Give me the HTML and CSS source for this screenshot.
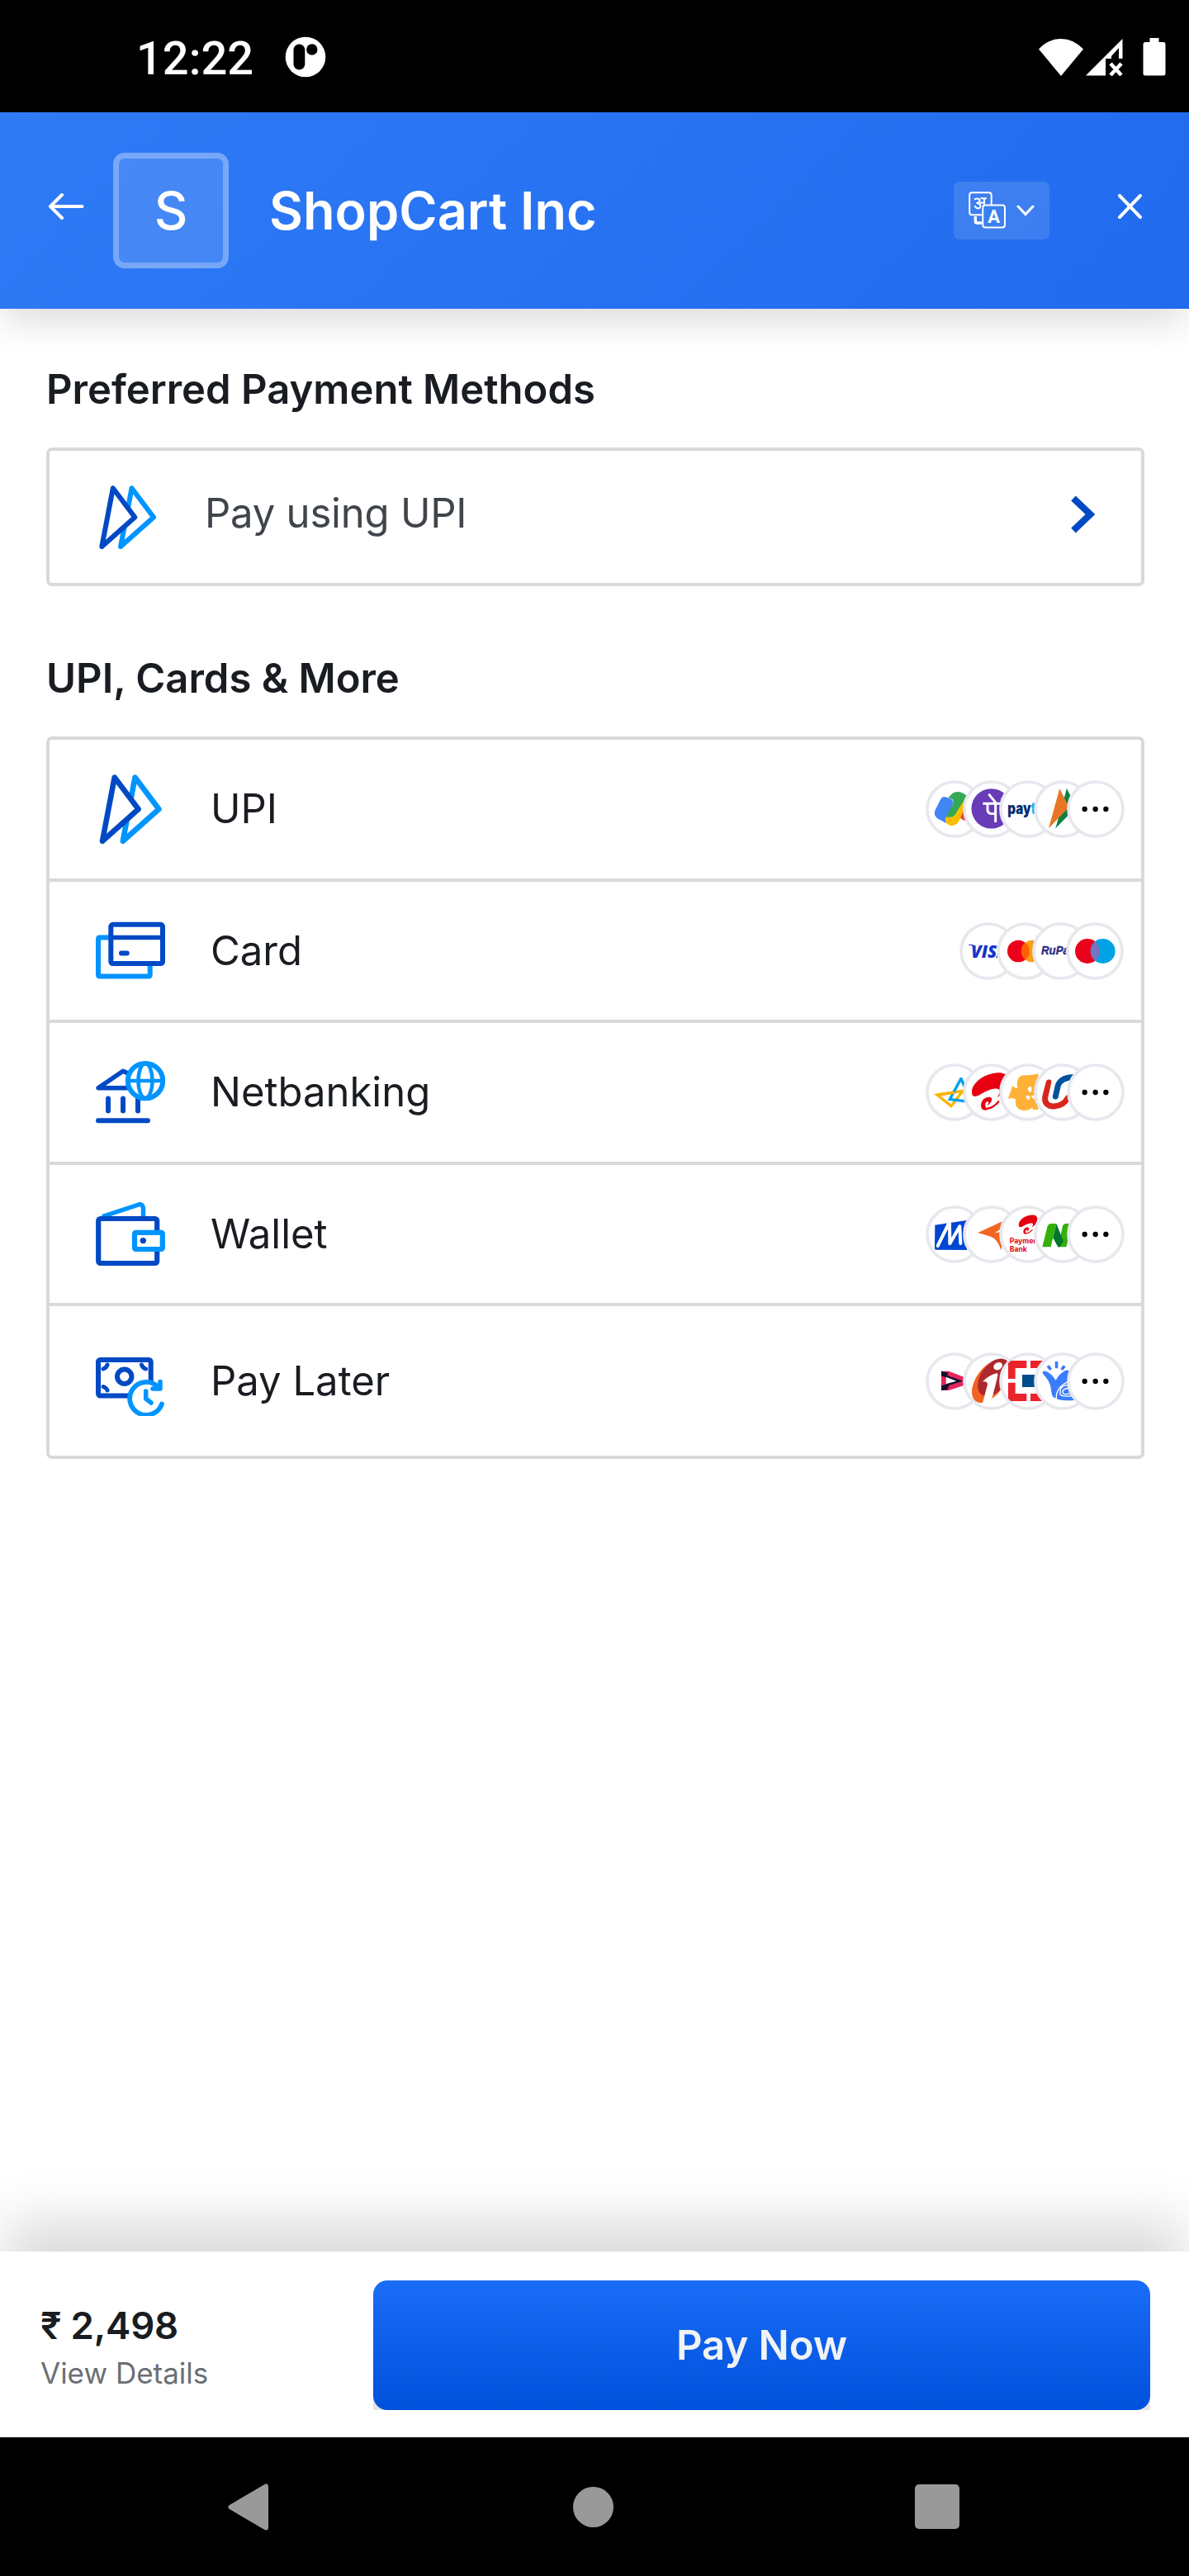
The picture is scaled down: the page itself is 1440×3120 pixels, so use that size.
FILE: index.html
```html
<!DOCTYPE html>
<html lang="en">
<head>
<meta charset="utf-8">
<title>ShopCart Inc - Checkout</title>
<link rel="stylesheet" href="styles.css">
</head>
<body>
<svg class="defs" width="0" height="0">
  <symbol id="upi" viewBox="0 0 84 84">
    <g fill="#fff" stroke-width="6.6" stroke-linejoin="round">
      <path stroke="#0094ff" d="M47.5 3.6 76.4 42 32.8 80.8Z"/>
      <path stroke="#0049c4" d="M22.7 3.6 51.6 42 8 80.8Z"/>
    </g>
  </symbol>
  <symbol id="more" viewBox="0 0 210 210">
    <circle cx="105" cy="105" r="99" class="ring"/>
    <circle cx="65" cy="105" r="9.5"/><circle cx="104" cy="105" r="9.5"/><circle cx="142" cy="105" r="9.5"/>
  </symbol>
  <symbol id="airtel" viewBox="0 0 140 150">
    <path fill="#e60012" d="M3 84C-4 55 30 17 78 7C110-1 136 5 139 30C141 52 120 82 98 96C106 80 112 68 98 64C78 60 48 76 28 89C14 95 5 93 3 84Z"/>
    <path fill="none" stroke="#e60012" stroke-width="7" stroke-linecap="round" d="M60 138C76 136 92 124 102 112"/>
    <path fill="#e60012" d="M37 132C33 108 52 92 70 95C86 100 72 121 58 128C66 118 68 110 58 112C48 118 52 136 62 141C48 148 38 141 37 132Z"/>
  </symbol>
</svg>

<div class="status">
  <span class="time">12:22</span>
  <svg class="app" viewBox="0 0 50 50"><circle cx="25" cy="25" r="24.3" fill="#fff"/><rect x="10.5" y="9.4" width="13.8" height="31.2" rx="6.9"/><circle cx="32.8" cy="16" r="6.7"/></svg>
  <svg class="wifi" viewBox="0 0 54 45"><path fill="#fff" d="M27 45 0 12.5Q12 0 27 0T54 12.5Z"/></svg>
  <svg class="signal" viewBox="0 0 45 45"><path fill="#fff" d="M44.500 0V24H40V11L31 21V24H24V44.500H0Z"/><path stroke="#fff" stroke-width="4.500" d="m30 30 13 14m0-14L30 44"/></svg>
  <svg class="battery" viewBox="0 0 28 46"><path fill="#fff" d="M8.500 0h11v5H25q2.500 0 2.500 3v35q0 2.500-2.500 2.500H3Q.5 45.500.5 43V8q0-3 2.500-3h5.500Z"/></svg>
</div>

<header class="header">
  <svg class="back" viewBox="0 0 44 34"><path d="M41.500 17H3M17 3 3 17l14 14" fill="none" stroke="#fff" stroke-width="4" stroke-linecap="round" stroke-linejoin="round"/></svg>
  <div class="logo">S</div>
  <h1 class="title">ShopCart Inc</h1>
  <div class="lang">
    <svg class="translate" viewBox="0 0 45 45">
      <g fill="none" stroke="#fff" stroke-width="2">
        <rect x="1.200" y="1.200" width="26.500" height="27" rx="3"/>
        <path d="M8.300 30v6q0 2 2 2h6" stroke-width="3.400"/>
        <path d="M7 9.500q5-2.500 6.500 1 0 3-4 3.500 5 0 5 3.500-1 4-4.500 2.500-2-1-2.500-3M14 13.500h5M19 8v10M14.500 8.200h7.500" stroke-width="2"/>
      </g>
      <rect x="17.300" y="16.500" width="26.700" height="27" rx="3" fill="#3b80ef" stroke="#fff" stroke-width="2"/>
      <text x="30.700" y="38" text-anchor="middle" font-size="22" font-weight="700" fill="#fff" font-family="Roboto, sans-serif">A</text>
    </svg>
    <svg class="down" viewBox="0 0 22 14"><path d="m2 2 9 9.500L20 2" fill="none" stroke="#fff" stroke-width="3" stroke-linecap="round"/></svg>
  </div>
  <svg class="close" viewBox="0 0 29 30"><path d="m2 2 25 26M27 2 2 28" stroke="#fff" stroke-width="4" stroke-linecap="round"/></svg>
</header>

<main class="main">
  <h2 class="heading">Preferred Payment Methods</h2>
  <div class="preferred">
    <svg class="pref-icon"><use href="#upi"/></svg>
    <span class="pref-label">Pay using UPI</span>
    <svg class="next" viewBox="0 0 30 46"><path d="M3 3.500 23.500 23 3 42.500" fill="none" stroke="#0049c4" stroke-width="8"/></svg>
  </div>

  <h2 class="heading second">UPI, Cards &amp; More</h2>
  <ul class="methods">
    <li class="row">
      <svg class="icon"><use href="#upi"/></svg>
      <span class="label">UPI</span>
      <div class="brands">
        <svg viewBox="0 0 210 210"><circle cx="105" cy="105" r="99" class="ring"/>
          <path fill="#ea4335" d="M120 125 150 85V148Q134 148 122 132Z"/>
          <path fill="#4285f4" d="M66 60Q74 60 86 65Q104 72 99 86L76 157L42 138Q29 128 34 110L54 70Q59 61 66 60Z"/>
          <path fill="#fbbc04" d="M75 132Q92 138 100 128L134 74H152L122 148Q110 168 88 164Q72 158 71 142Z"/>
          <path fill="#34a853" d="M98 70Q90 65 83 64Q96 43 116 42Q132 42 150 57L106 126Q96 140 76 131Q78 122 96 94Q104 80 98 70Z"/></svg>
        <svg viewBox="0 0 210 210"><circle cx="105" cy="105" r="99" class="ring"/>
          <circle cx="104" cy="103" r="72.500" fill="#683bb7"/>
          <path fill="none" stroke="#fff" stroke-width="9" d="M73 85H150M94 50 120 82M90 87V108Q92 127 119 120M119 85V153"/></svg>
        <svg viewBox="0 0 210 210"><circle cx="105" cy="105" r="99" class="ring"/>
          <text x="31" y="122" class="paytm" textLength="146" lengthAdjust="spacingAndGlyphs">pay<tspan class="cyan">tm</tspan></text></svg>
        <svg viewBox="0 0 210 210"><circle cx="105" cy="105" r="99" class="ring"/>
          <path fill="#0a8043" d="M120 30 154 98 79 175Z"/><path fill="#e97626" d="M94 30 128 98 54 175Z"/></svg>
        <svg><use href="#more"/></svg>
      </div>
    </li>
    <li class="row short">
      <svg class="icon" viewBox="0 0 84 84"><g fill="none" stroke-width="6" stroke-linecap="round" stroke-linejoin="round">
        <path stroke="#0094ff" d="M16 25.400H5Q3 25.400 3 27.400V70.600Q3 72.600 5 72.600H63.700Q65.700 72.600 65.700 70.600V60"/>
        <rect x="18.300" y="9.800" width="62.700" height="47.200" rx="2.500" stroke="#0049c4" fill="#fff"/>
        <path stroke="#0049c4" d="M19 25.600H80" stroke-width="5.500"/><path stroke="#0049c4" d="M31 44.400H37.700"/></g></svg>
      <span class="label">Card</span>
      <div class="brands four">
        <svg viewBox="0 0 210 210"><circle cx="105" cy="105" r="99" class="ring"/>
          <path fill="#1434cb" d="M33 81H50V87Q42 83 33 83Z"/>
          <text x="42" y="128" class="visa" textLength="136" lengthAdjust="spacingAndGlyphs">VISA</text></svg>
        <svg viewBox="0 0 210 210"><circle cx="105" cy="105" r="99" class="ring"/>
          <circle cx="79" cy="105" r="40" fill="#eb001b"/><circle cx="130" cy="105" r="40" fill="#f79e1b"/><path fill="#ff5f00" d="M104.500 74A40 40 0 0 1 104.500 136A40 40 0 0 1 104.500 74"/></svg>
        <svg viewBox="0 0 210 210"><circle cx="105" cy="105" r="99" class="ring"/>
          <text x="33" y="117" class="rupay" textLength="124" lengthAdjust="spacingAndGlyphs">RuPay</text></svg>
        <svg viewBox="0 0 210 210"><circle cx="105" cy="105" r="99" class="ring"/>
          <circle cx="78" cy="105" r="45" fill="#eb001b"/><circle cx="134" cy="105" r="45" fill="#00a2e5"/><path fill="#7673c0" d="M106 70A45 45 0 0 1 106 140A45 45 0 0 1 106 70"/></svg>
      </div>
    </li>
    <li class="row">
      <svg class="icon" viewBox="0 0 84 84"><g fill="none" stroke="#0049c4" stroke-width="6" stroke-linecap="round" stroke-linejoin="round">
        <path d="M50 24 33 16.200 3 36.800H50" stroke-width="5.500"/>
        <path d="M15 49.500V64.500M33 49.500V64.500M51 49.500V64.500M3 76.300H63"/>
        <g stroke="#0094ff"><circle cx="60" cy="28.100" r="21.200" fill="#fff"/><ellipse cx="60" cy="28.100" rx="8.500" ry="21" stroke-width="4.500"/><path d="M39 28.100H81" stroke-width="4.500"/></g></g></svg>
      <span class="label">Netbanking</span>
      <div class="brands">
        <svg viewBox="0 0 210 210"><circle cx="105" cy="105" r="99" class="ring"/>
          <g fill="none" stroke-width="10"><path stroke="#ffb300" d="M42 114 93 155 135 100Z"/><path stroke="#00a0f0" d="M130 53 88 130 165 140 128 53"/><path stroke="#ffb300" d="M42 114 105 106"/></g></svg>
        <svg viewBox="0 0 210 210"><circle cx="105" cy="105" r="99" class="ring"/><use href="#airtel" x="31" y="29" width="136" height="148"/></svg>
        <svg viewBox="0 0 210 210"><circle cx="105" cy="105" r="99" class="ring"/>
          <path fill="#ffb137" d="M32 130 49 81Q56 92 68 88Q62 76 66 66Q70 44 92 43Q120 44 142 37V168H122V158Q112 171 88 171Q64 168 60 148Q59 138 60 130Q46 122 32 130Z"/>
          <path fill="#fff" d="M104 90q6-8 13-5q4 14-3 20q-8-2-10-15M97 118q8-6 15 2q0 12-6 13q-8-4-9-15M117 118q8-4 18 0v10q-10 6-18-10"/></svg>
        <svg viewBox="0 0 210 210"><circle cx="105" cy="105" r="99" class="ring"/>
          <g fill="none" stroke-width="21" stroke-linecap="round"><path stroke="#d9251d" d="M55 69 42 118C36 146 54 157 74 156Q108 154 124 125"/><path stroke="#fff" stroke-width="9" d="M70 60 60 112Q56 140 77 139Q96 137 104 110L118 66"/><path stroke="#00529b" d="M79 120 88 80Q98 52 140 50"/></g></svg>
        <svg><use href="#more"/></svg>
      </div>
    </li>
    <li class="row short">
      <svg class="icon" viewBox="0 0 84 84"><g fill="none" stroke-width="6.200" stroke-linejoin="round">
        <path stroke="#0094ff" stroke-width="5.500" d="M8 20.500 52 6Q57.500 5 57.500 11V21"/>
        <rect x="3.200" y="23" width="71" height="54" rx="2.500" stroke="#0049c4"/>
        <rect x="47" y="39.800" width="33.800" height="20.200" rx="1.500" stroke="#0094ff" fill="#fff"/></g>
        <circle cx="57.300" cy="49.600" r="3.700" fill="#0049c4"/></svg>
      <span class="label">Wallet</span>
      <div class="brands">
        <svg viewBox="0 0 210 210"><circle cx="105" cy="105" r="99" class="ring"/>
          <path fill="#0046d2" d="M34 71 150 54V162L37 161Q33 161 33 156Z"/><path fill="none" stroke="#fff" stroke-width="12" stroke-linecap="round" stroke-linejoin="round" d="M44 147 87 60 88 139 124 76 127 138"/></svg>
        <svg viewBox="0 0 210 210"><circle cx="105" cy="105" r="99" class="ring"/>
          <path fill="#f26522" d="M54 100 160 50 139 163Q128 122 101 113Q82 106 54 100Z"/><path fill="#fff" d="M116 100 138 86V97Z"/></svg>
        <svg viewBox="0 0 210 210"><circle cx="105" cy="105" r="99" class="ring"/><use href="#airtel" x="70" y="32" width="70" height="76"/>
          <text x="38" y="137" class="airtel-text">Payments</text><text x="38" y="168" class="airtel-text">Bank</text></svg>
        <svg viewBox="0 0 210 210"><circle cx="105" cy="105" r="99" class="ring"/>
          <path fill="#34b00b" d="M31 151 50 75Q54 66 62 66H82L62 151ZM88 151 105 75Q108 66 118 66H140L118 151Z"/><path fill="#04752d" d="M82 66 108 130 94 151H88L70 118Z"/></svg>
        <svg><use href="#more"/></svg>
      </div>
    </li>
    <li class="row tall">
      <svg class="icon" viewBox="0 0 84 84"><g fill="none" stroke="#0049c4" stroke-width="6" stroke-linecap="round" stroke-linejoin="round">
        <rect x="3" y="15.900" width="63.700" height="43.600" rx="2.500"/><circle cx="34.700" cy="36.300" r="8.700"/>
        <path d="M9 27Q13 25.500 14 22M60.500 27Q56.500 25.500 55.500 22M9 48.500Q13 50 14 53" stroke-width="5"/>
        <circle cx="60.700" cy="62.400" r="20" fill="#fff" stroke="none"/>
        <g stroke="#0094ff"><path d="M80 69.500A20 20 0 1 1 74.500 48" stroke-width="5.800"/><path d="M78 42.500V51H69M60.700 54V63L67 68" stroke-width="5.500"/></g></g></svg>
      <span class="label">Pay Later</span>
      <div class="brands">
        <svg viewBox="0 0 210 210"><circle cx="105" cy="105" r="99" class="ring"/>
          <path fill="#e6255c" d="M57 68H84L150 94V116L84 138H57Z"/><path fill="#12122e" d="M57 68 82 74 79 84 136 104 86 119 79 136 57 138V120L74 116V91L57 86Z"/><path fill="#e6255c" d="M57 86 74 91V116L57 120Z"/><path fill="#fff" d="M74 89 112 104 74 115Z"/></svg>
        <svg viewBox="0 0 210 210"><circle cx="105" cy="105" r="99" class="ring"/>
          <ellipse cx="98" cy="106" rx="50" ry="88" fill="#f06321" transform="rotate(35 98 106)"/><ellipse cx="113" cy="91" rx="47" ry="77" fill="#ae282e" transform="rotate(35 113 91)"/>
          <ellipse cx="128" cy="50" rx="17" ry="13" fill="#fff" transform="rotate(-30 128 50)"/><path fill="#fff" d="M72 106Q96 82 125 75Q129 79 126 90L107 165Q103 178 72 184L90 116Q90 104 72 106Z"/></svg>
        <svg viewBox="0 0 210 210"><circle cx="105" cy="105" r="99" class="ring"/>
          <path fill="#ed232a" fill-rule="evenodd" d="M43 30H100V57H59V96H33V40ZM114 30H170L180 40V96H154V57H114ZM33 110H59V150H100V177H43L33 167ZM154 110H180V167L170 177H114V150H154Z"/><path fill="#004c8f" d="M84 81H129V126H84Z"/></svg>
        <svg viewBox="0 0 210 210"><circle cx="105" cy="105" r="99" class="ring"/>
          <g fill="#3a7cfc"><rect x="77" y="33" width="11" height="25" rx="3"/><rect x="51" y="47" width="11" height="18" rx="3" transform="rotate(-38 56 56)"/><rect x="101" y="47" width="11" height="18" rx="3" transform="rotate(38 107 56)"/>
          <path d="M32 73Q35 64 47 70Q68 80 80 101Q92 77 116 65H150V173Q90 180 68 160Q64 148 61 123Q56 103 42 88Q33 80 32 73Z"/></g>
          <path fill="none" stroke="#fff" stroke-width="4" d="M82 170Q78 125 132 103M96 152Q92 126 116 119L150 122M96 152Q102 164 150 156M132 131Q110 128 104 143Q106 158 132 149"/></svg>
        <svg><use href="#more"/></svg>
      </div>
    </li>
  </ul>
</main>

<footer class="footer">
  <div class="amount">
    <div class="price">₹ 2,498</div>
    <div class="details">View Details</div>
  </div>
  <div class="pay-wrap"><button class="pay">Pay Now</button></div>
</footer>

<nav class="nav">
  <svg class="nav-back" viewBox="0 0 50 57"><path d="M46 3.500V53.500L3.500 28.500Z" fill="#999" stroke="#999" stroke-width="6" stroke-linejoin="round"/></svg>
  <div class="nav-home"></div>
  <div class="nav-recent"></div>
</nav>
</body>
</html>
```
FILE: styles.css
```css
* { box-sizing: border-box; }
body {
  margin: 0;
  width: 1440px;
  height: 3120px;
  display: flex;
  flex-direction: column;
  background: #fff;
  font-family: Inter, "Liberation Sans", sans-serif;
  color: #191c21;
  overflow: hidden;
}
svg { display: block; flex: none; }
.defs { display: none; }

.status {
  height: 136px;
  flex: none;
  display: flex;
  align-items: center;
  background: #000;
  padding: 2px 28px 0 165px;
}
.time { width: 180px; font: 500 56px/66px Roboto, sans-serif; color: #fff; padding-top: 4px; }
.app { width: 50px; height: 50px; }
.wifi { width: 54px; height: 45px; margin: 0 3px 0 auto; }
.signal { width: 45px; height: 45px; margin-right: 24px; }
.battery { width: 28px; height: 46px; }

.header {
  height: 238px;
  flex: none;
  display: flex;
  align-items: center;
  padding: 0 57px 0 58px;
  background: linear-gradient(135deg, #2f7bf6, #206aee);
  box-shadow: 0 20px 42px -5px rgba(0, 0, 0, .14);
  color: #fff;
}
.back { width: 44px; height: 34px; margin: 0 35px 10px 0; }
.logo {
  width: 140px;
  height: 140px;
  border: 7px solid rgba(255, 255, 255, .27);
  border-radius: 14px;
  background: rgba(255, 255, 255, .12);
  display: flex;
  align-items: center;
  justify-content: center;
  font-size: 63px;
  font-weight: 500;
}
.title { margin: 0 0 0 49px; font-size: 63px; line-height: 76px; font-weight: 600; white-space: nowrap; }
.lang {
  width: 116px;
  height: 70px;
  margin: 0 83px 0 auto;
  padding: 0 18px;
  border-radius: 7px;
  background: rgba(255, 255, 255, .12);
  display: flex;
  align-items: center;
  justify-content: space-between;
}
.translate { width: 45px; height: 45px; margin-bottom: 2px; }
.down { width: 22px; height: 14px; }
.close { width: 29px; height: 30px; margin-bottom: 11px; }

.main { flex: 1; padding: 68px 54px 0 56px; }
.heading { margin: 0; font-size: 49px; line-height: 60px; font-weight: 600; }
.preferred {
  height: 168px;
  margin-top: 40px;
  padding: 0 55px 0 56px;
  border: 4px solid #d8d9db;
  border-radius: 7px;
  display: flex;
  align-items: center;
}
.pref-icon { width: 77px; height: 77px; }
.pref-label { margin: 0 auto 8px 55px; font-size: 49px; line-height: 60px; letter-spacing: -.2px; color: #40454b; }
.next { width: 30px; height: 46px; margin-bottom: 6px; }
.second { margin-top: 82px; }
.methods {
  list-style: none;
  margin: 40px 0 0;
  padding: 0;
  border: 4px solid #d8d9db;
  border-radius: 7px;
}
.row {
  height: 172px;
  padding: 0 20px 0 56px;
  border-bottom: 4px solid #d8d9db;
  display: flex;
  align-items: center;
}
.row.short { height: 171px; }
.row.tall { height: 181px; border-bottom: 0; }
.icon { width: 84px; height: 84px; }
.label { margin: 0 auto 0 55px; font-size: 49px; line-height: 60px; }
.brands { display: flex; }
.brands > svg { width: 70px; height: 70px; }
.brands > :nth-child(2) { margin-left: -24.6px; }
.brands > :nth-child(3) { margin-left: -26.6px; }
.brands > :nth-child(4) { margin-left: -27.6px; }
.brands > :nth-child(5) { margin-left: -30px; }
.brands.four { margin-right: 1.3px; }
.brands.four > :nth-child(2) { margin-left: -25px; }
.brands.four > :nth-child(3) { margin-left: -27.3px; }
.brands.four > :nth-child(4) { margin-left: -29px; }
.ring { fill: #fff; stroke: #e7e8ee; stroke-width: 11px; }
.paytm { font: 900 56px Inter, sans-serif; fill: #002e6e; }
.cyan { fill: #00baf2; }
.visa { font: italic 800 63px "Open Sans", sans-serif; fill: #1434cb; }
.rupay { font: italic 700 43px "Liberation Sans", sans-serif; fill: #2b2a83; stroke: #2b2a83; stroke-width: 1px; }
.airtel-text { font: 700 26px Inter, sans-serif; fill: #e60012; }

.footer {
  height: 225px;
  flex: none;
  display: flex;
  align-items: center;
  justify-content: space-between;
  padding: 2px 47px 0 49px;
  background: #fff;
  box-shadow: 0 -42px 62px -6px rgba(0, 0, 0, .15);
}
.price { margin-top: 3px; font-size: 45.500px; line-height: 56px; font-weight: 600; letter-spacing: -.2px; }
.details { margin-top: 8px; font-size: 35px; line-height: 43px; color: #6b6f73; }
.pay-wrap { width: 941px; height: 157px; background: linear-gradient(#fff 50%, #e4e4e4 50%); }
.pay {
  width: 100%;
  height: 100%;
  padding: 0;
  border: 0;
  border-radius: 17px;
  background: linear-gradient(#1a6df7, #0050db);
  color: #f1f2f3;
  font: 600 49px/60px Inter, sans-serif;
}

.nav {
  height: 168px;
  flex: none;
  display: flex;
  align-items: center;
  justify-content: space-between;
  padding: 0 278px 0 276px;
  background: #000;
}
.nav-back { width: 50px; height: 57px; }
.nav-home { width: 49px; height: 49px; margin-left: 2px; border-radius: 50%; background: #999; }
.nav-recent { width: 54px; height: 54px; border-radius: 5px; background: #999; }
```
